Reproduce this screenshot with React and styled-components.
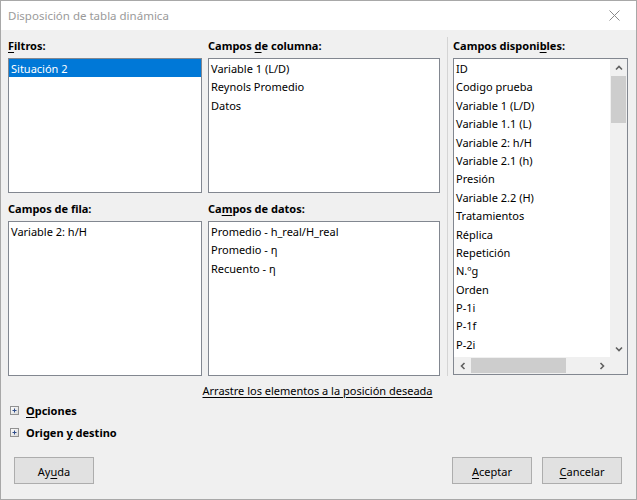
import React from 'react';
import styled, { createGlobalStyle } from 'styled-components';

const Global = createGlobalStyle`
  html, body {
    margin: 0;
    padding: 0;
    background: #f0f0f0;
  }
  body {
    font-family: "Noto Sans", "Open Sans", sans-serif;
    font-size: 11px;
    color: #000;
  }
`;

const Window = styled.div`
  width: 637px;
  height: 500px;
  box-sizing: border-box;
  border: 1px solid #a8a8a8;
  background: #f0f0f0;
  display: flex;
  flex-direction: column;
`;

const TitleBar = styled.div`
  height: 29px;
  background: #fff;
  display: flex;
  align-items: center;
  justify-content: space-between;
  padding-left: 7px;
  color: #9a9a9a;
  font-size: 11.5px;
`;

const CloseBtn = styled.div`
  width: 44px;
  height: 29px;
  display: flex;
  align-items: center;
  justify-content: center;
`;

const Content = styled.div`
  padding: 7px 8px 0 7px;
  display: flex;
`;

const FieldGrid = styled.div`
  display: grid;
  grid-template-columns: 194px 232px;
  column-gap: 6px;
  row-gap: 7px;
`;

const Separator = styled.div`
  width: 1px;
  background: #d4d4d4;
  margin: 0 5px 0 7px;
`;

const Field = styled.div`
  display: flex;
  flex-direction: column;
  width: ${(p) => p.$w || 'auto'};
`;

const Label = styled.div`
  font-weight: bold;
  line-height: 16px;
  height: 16px;
  padding-top: 1px;
  margin-bottom: 4px;
  white-space: nowrap;
`;

const List = styled.div`
  box-sizing: border-box;
  height: ${(p) => p.$h}px;
  background: #fff;
  border: 1px solid #828790;
  overflow: hidden;
`;

const Item = styled.div`
  box-sizing: border-box;
  height: 18.4px;
  line-height: 16.4px;
  padding: 2px 0 0 2px;
  white-space: nowrap;
  background: ${(p) => (p.$selected ? '#0078d7' : 'transparent')};
  color: ${(p) => (p.$selected ? '#fff' : '#000')};
`;

const ScrollList = styled.div`
  box-sizing: border-box;
  height: ${(p) => p.$h}px;
  border: 1px solid #828790;
  display: grid;
  grid-template-columns: 1fr 17px;
  grid-template-rows: 1fr 17px;
  background: #f0f0f0;
`;

const ScrollBody = styled.div`
  background: #fff;
  overflow: hidden;
`;

const VScroll = styled.div`
  display: flex;
  flex-direction: column;
  background: #f0f0f0;
`;

const HScroll = styled.div`
  display: flex;
  background: #f0f0f0;
`;

const ArrowCell = styled.div`
  width: 17px;
  height: 17px;
  flex: none;
  display: flex;
  align-items: center;
  justify-content: center;
`;

const Track = styled.div`
  flex: 1;
  display: flex;
  flex-direction: ${(p) => (p.$vertical ? 'column' : 'row')};
`;

const Thumb = styled.div`
  background: #cdcdcd;
  ${(p) =>
    p.$vertical
      ? `height: ${p.$size}px; margin: 0 1px;`
      : `width: ${p.$size}px; margin: 1px 0;`}
`;

const Hint = styled.div`
  text-align: center;
  margin-top: 7px;
  line-height: 16px;
  padding-right: 2px;
`;

const Underlined = styled.span`
  text-decoration: underline;
  text-underline-offset: 2px;
`;

const Expander = styled.div`
  display: flex;
  align-items: center;
  height: 22px;
  padding-left: 9px;
  gap: 7px;
  font-weight: bold;
`;

const Footer = styled.div`
  display: flex;
  justify-content: space-between;
  padding: 0 14px 0 13px;
  margin-top: 14px;
`;

const ButtonGroup = styled.div`
  display: flex;
  gap: 10px;
`;

const Button = styled.div`
  width: 80px;
  height: 27px;
  box-sizing: border-box;
  border: 1px solid #adadad;
  background: #e1e1e1;
  display: flex;
  align-items: center;
  justify-content: center;
  padding-top: 1px;
`;

const Chevron = ({ dir }) => {
  const paths = {
    up: 'M1 4.5 L4 1.5 L7 4.5',
    down: 'M1 1.5 L4 4.5 L7 1.5',
    left: 'M4.5 1 L1.5 4 L4.5 7',
    right: 'M1.5 1 L4.5 4 L1.5 7',
  };
  const vertical = dir === 'up' || dir === 'down';
  return (
    <svg width={vertical ? 8 : 6} height={vertical ? 6 : 8} viewBox={vertical ? '0 0 8 6' : '0 0 6 8'}>
      <path d={paths[dir]} fill="none" stroke="#606060" strokeWidth="1.6" />
    </svg>
  );
};

const PlusBox = () => (
  <svg width="9" height="9" viewBox="0 0 9 9">
    <defs>
      <linearGradient id="pb" x1="0" y1="0" x2="1" y2="1">
        <stop offset="0" stopColor="#ffffff" />
        <stop offset="1" stopColor="#d8d8d8" />
      </linearGradient>
    </defs>
    <rect x="0.5" y="0.5" width="8" height="8" fill="url(#pb)" stroke="#919191" />
    <path d="M2.5 4.5 H6.5 M4.5 2.5 V6.5" stroke="#2f4d8a" strokeWidth="1" />
  </svg>
);

const available = [
  'ID',
  'Codigo prueba',
  'Variable 1 (L/D)',
  'Variable 1.1 (L)',
  'Variable 2: h/H',
  'Variable 2.1 (h)',
  'Presión',
  'Variable 2.2 (H)',
  'Tratamientos',
  'Réplica',
  'Repetición',
  'N.ºg',
  'Orden',
  'P-1i',
  'P-1f',
  'P-2i',
];

const App = () => {
  return (
    <>
      <Global />
      <Window>
        <TitleBar>
          <span>Disposición de tabla dinámica</span>
          <CloseBtn>
            <svg width="11" height="11" viewBox="0 0 11 11">
              <path d="M0.5 0.5 L10.5 10.5 M10.5 0.5 L0.5 10.5" stroke="#8a8a8a" strokeWidth="1" />
            </svg>
          </CloseBtn>
        </TitleBar>

        <Content>
          <FieldGrid>
            <Field>
              <Label>
                <Underlined>F</Underlined>iltros:
              </Label>
              <List $h={135}>
                <Item $selected>Situación 2</Item>
              </List>
            </Field>
            <Field>
              <Label>
                Campos <Underlined>d</Underlined>e columna:
              </Label>
              <List $h={135}>
                <Item>Variable 1 (L/D)</Item>
                <Item>Reynols Promedio</Item>
                <Item>Datos</Item>
              </List>
            </Field>
            <Field>
              <Label>Campos de fila:</Label>
              <List $h={155}>
                <Item>Variable 2: h/H</Item>
              </List>
            </Field>
            <Field>
              <Label>
                Ca<Underlined>m</Underlined>pos de datos:
              </Label>
              <List $h={155}>
                <Item>Promedio - h_real/H_real</Item>
                <Item>Promedio - η</Item>
                <Item>Recuento - η</Item>
              </List>
            </Field>
          </FieldGrid>

          <Separator />

          <Field $w="175px">
            <Label>
              Campos disponi<Underlined>b</Underlined>les:
            </Label>
            <ScrollList $h={317}>
              <ScrollBody>
                {available.map((name) => (
                  <Item key={name}>{name}</Item>
                ))}
              </ScrollBody>
              <VScroll>
                <ArrowCell>
                  <Chevron dir="up" />
                </ArrowCell>
                <Track $vertical>
                  <Thumb $vertical $size={47} />
                </Track>
                <ArrowCell>
                  <Chevron dir="down" />
                </ArrowCell>
              </VScroll>
              <HScroll>
                <ArrowCell>
                  <Chevron dir="left" />
                </ArrowCell>
                <Track>
                  <Thumb $size={95} />
                </Track>
                <ArrowCell>
                  <Chevron dir="right" />
                </ArrowCell>
              </HScroll>
              <div />
            </ScrollList>
          </Field>
        </Content>

        <Hint>
          <Underlined>Arrastre los elementos a la posición deseada</Underlined>
        </Hint>

        <Expander>
          <PlusBox />
          <span>
            <Underlined>O</Underlined>pciones
          </span>
        </Expander>
        <Expander>
          <PlusBox />
          <span>
            Origen <Underlined>y</Underlined> destino
          </span>
        </Expander>

        <Footer>
          <Button>
            <span>
              Ay<Underlined>u</Underlined>da
            </span>
          </Button>
          <ButtonGroup>
            <Button>
              <span>
                <Underlined>A</Underlined>ceptar
              </span>
            </Button>
            <Button>
              <span>
                <Underlined>C</Underlined>ancelar
              </span>
            </Button>
          </ButtonGroup>
        </Footer>
      </Window>
    </>
  );
};

export default App;
